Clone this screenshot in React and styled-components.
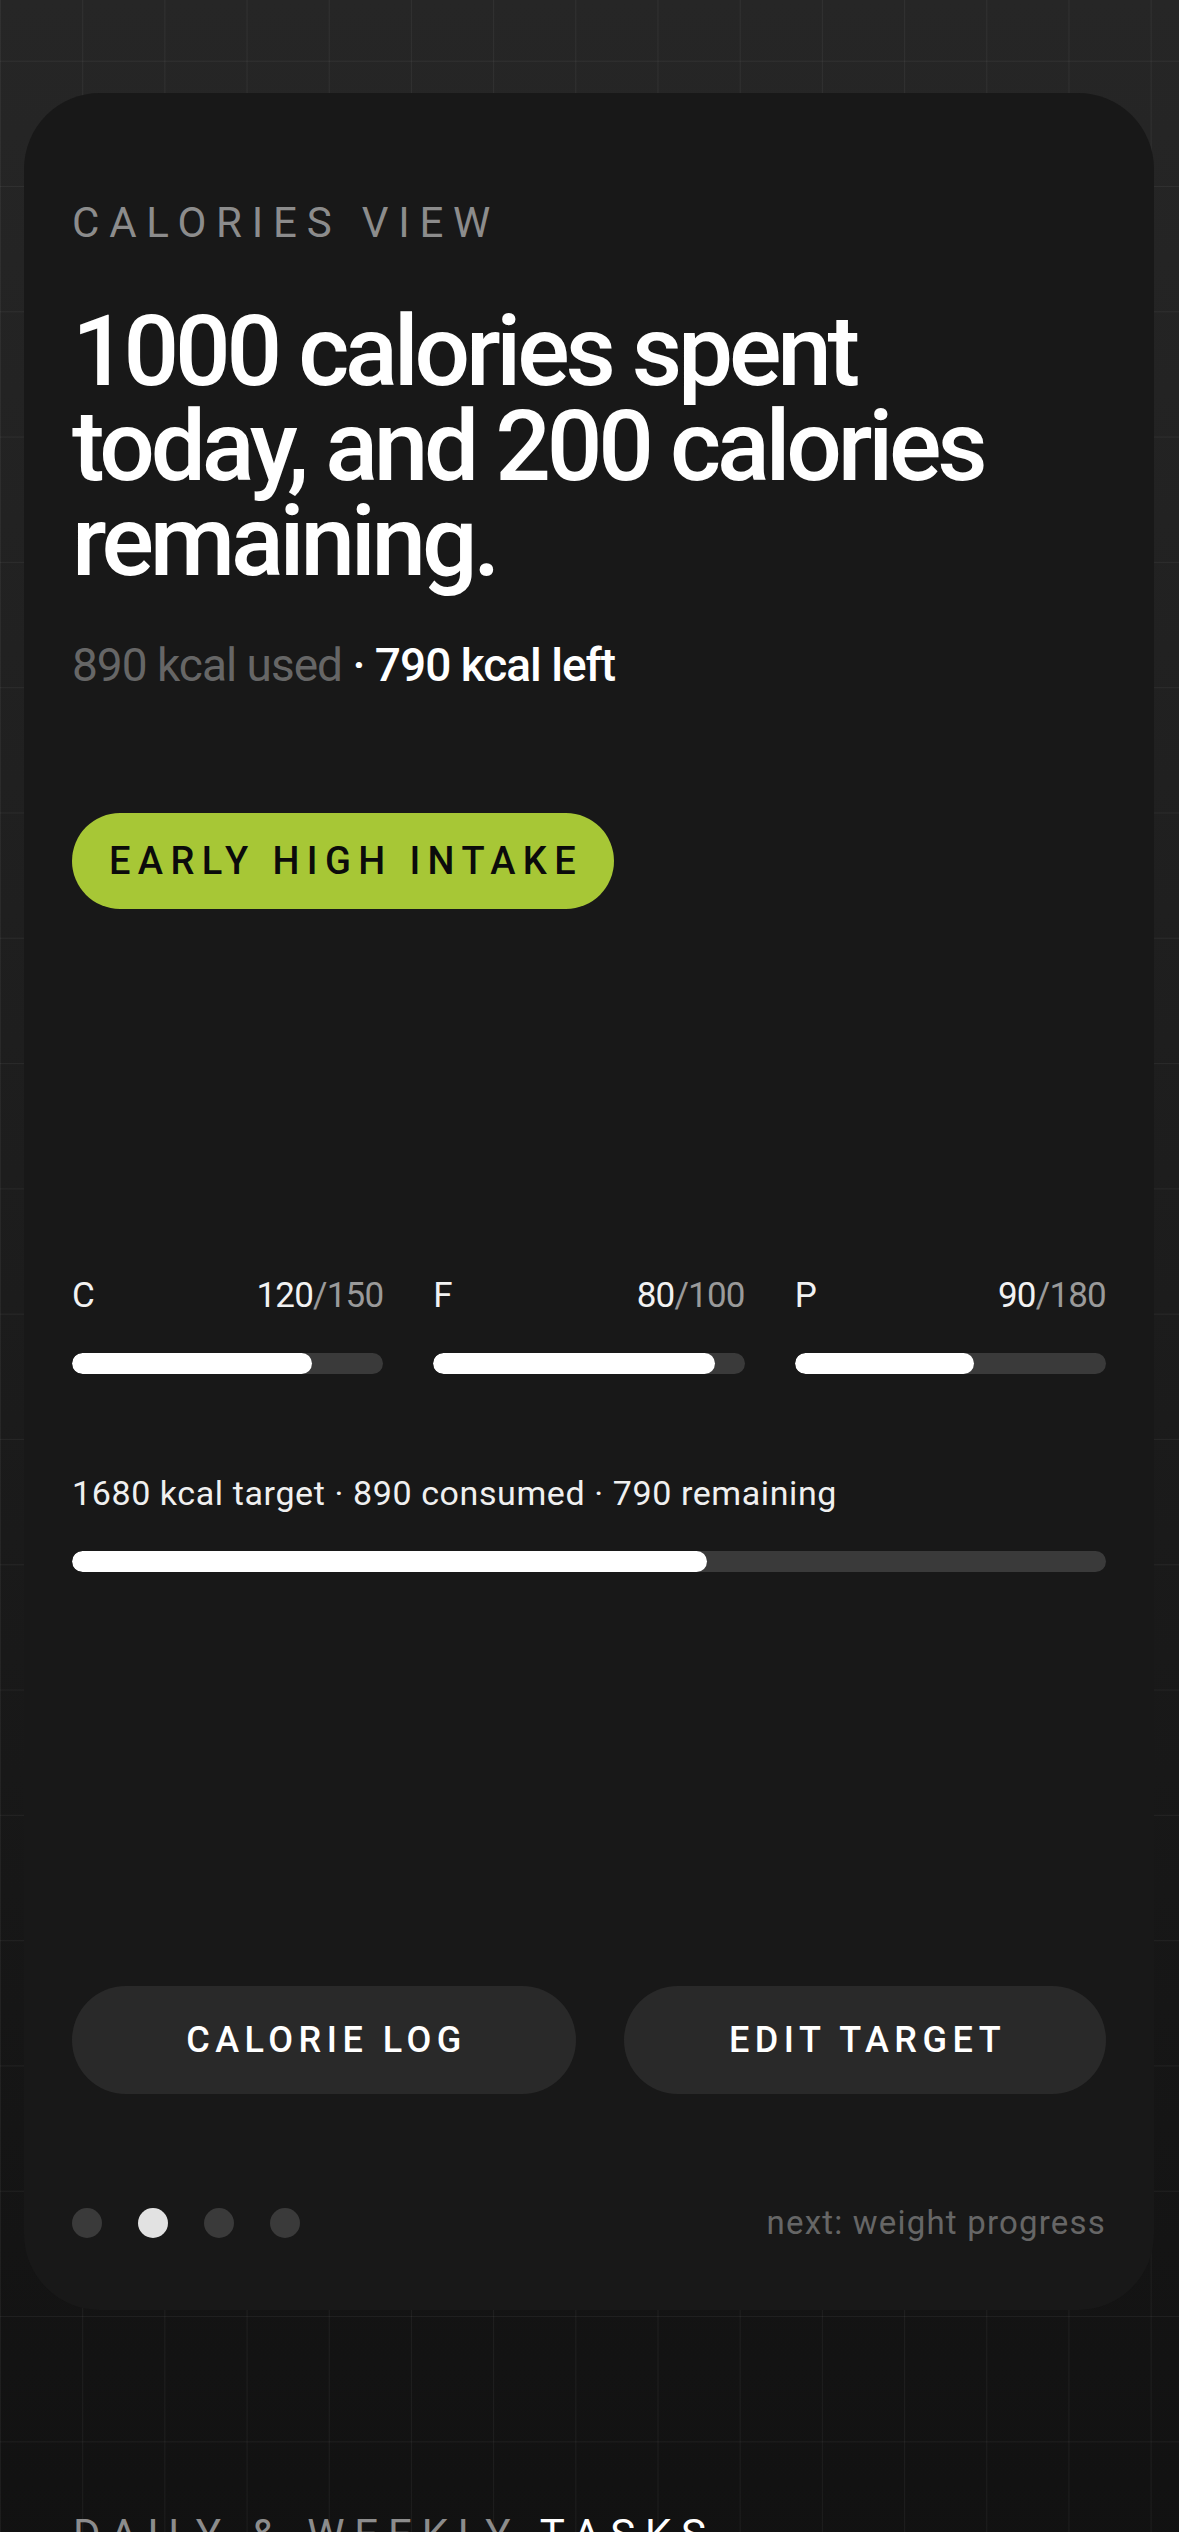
import React from 'react';
import styled, { createGlobalStyle } from 'styled-components';

const GlobalStyle = createGlobalStyle`
  html, body {
    margin: 0;
    padding: 0;
    background: #121212;
  }
  body {
    font-family: Roboto, "Noto Sans", "DejaVu Sans", sans-serif;
    -webkit-font-smoothing: antialiased;
  }
`;

const Page = styled.div`
  min-height: 100vh;
  box-sizing: border-box;
  padding: 93px 25px 40px 24px;
  overflow: hidden;
  background-color: #121212;
  background-image:
    linear-gradient(to right, rgba(255, 255, 255, 0.05) 1px, transparent 1px),
    linear-gradient(to bottom, rgba(255, 255, 255, 0.05) 1px, transparent 1px),
    linear-gradient(to bottom, #262626 0%, #1c1c1c 50%, #111111 100%);
  background-size: 82.2px 125.3px, 82.2px 125.3px, 100% 100%;
  background-position: 0 60.7px, 0 60.7px, 0 0;
`;

const Card = styled.section`
  display: flex;
  flex-direction: column;
  background: #181818;
  border-radius: 76px;
  padding: 105px 48px 67px;
`;

const Eyebrow = styled.div`
  font-size: 42px;
  line-height: 50px;
  letter-spacing: 9.8px;
  text-transform: uppercase;
  color: ${(p) => p.$color || '#8c8c8c'};
`;

const Headline = styled.h1`
  margin: 56px 0 0;
  font-size: 98px;
  line-height: 95px;
  font-weight: 500;
  letter-spacing: -4.2px;
  color: #ffffff;
`;

const Summary = styled.p`
  margin: 48px 0 0;
  font-size: 46px;
  line-height: 56px;
  letter-spacing: -1px;
`;

const Muted = styled.span`
  color: #666666;
  font-weight: 400;
`;

const Strong = styled.span`
  color: #ffffff;
  font-weight: 500;
`;

const Badge = styled.div`
  align-self: flex-start;
  margin-top: 120px;
  height: 96px;
  display: inline-flex;
  align-items: center;
  padding: 0 31px 0 37px;
  border-radius: 48px;
  background: #a7c736;
  color: #0b0b0b;
  font-size: 38px;
  font-weight: 500;
  letter-spacing: 7.4px;
`;

const MacroGrid = styled.div`
  margin-top: 366px;
  display: grid;
  grid-template-columns: repeat(3, 1fr);
  gap: 50px;
`;

const MacroHead = styled.div`
  display: flex;
  justify-content: space-between;
  font-size: 35px;
  line-height: 42px;
  color: #f2f2f2;
`;

const MacroValue = styled.span`
  letter-spacing: -0.8px;
`;

const Target = styled.span`
  color: #9a9a9a;
`;

const Track = styled.div`
  margin-top: ${(p) => p.$gap || 36}px;
  height: 21px;
  border-radius: 11px;
  background: #3a3a3a;
  overflow: hidden;
`;

const Fill = styled.div`
  height: 100%;
  border-radius: 11px;
  background: #ffffff;
`;

const TotalLabel = styled.div`
  margin-top: 98px;
  font-size: 34px;
  line-height: 42px;
  color: #f0f0f0;
  letter-spacing: 0.6px;
`;

const Actions = styled.div`
  margin-top: 414px;
  display: grid;
  grid-template-columns: 504fr 482fr;
  gap: 48px;
`;

const Action = styled.button`
  height: 108px;
  border: none;
  border-radius: 54px;
  background: #292929;
  color: #ffffff;
  font-family: inherit;
  font-size: 36px;
  font-weight: 500;
  letter-spacing: 5.5px;
  padding: 0 0 0 5px;
  cursor: pointer;
`;

const Footer = styled.div`
  margin-top: 109px;
  display: flex;
  align-items: center;
  justify-content: space-between;
`;

const Dots = styled.div`
  display: flex;
  gap: 36px;
`;

const Dot = styled.span`
  width: 30px;
  height: 30px;
  border-radius: 50%;
  background: ${(p) => (p.$active ? '#e2e2e2' : '#3a3a3a')};
`;

const NextLabel = styled.span`
  font-size: 33px;
  line-height: 40px;
  color: #666666;
  letter-spacing: 1.2px;
`;

const SectionTitle = styled(Eyebrow)`
  margin: 200px 49px 0;
`;

const Highlight = styled.span`
  color: #ffffff;
`;

const macros = [
  { key: 'C', value: 120, target: 150, fill: 77 },
  { key: 'F', value: 80, target: 100, fill: 90.5 },
  { key: 'P', value: 90, target: 180, fill: 57.7 },
];

const App = () => {
  return (
    <>
      <GlobalStyle />
      <Page>
        <Card>
          <Eyebrow>Calories view</Eyebrow>
          <Headline>
            1000 calories spent
            <br />
            today, and 200 calories
            <br />
            remaining.
          </Headline>
          <Summary>
            <Muted>890 kcal used</Muted>
            <Strong> · 790 kcal left</Strong>
          </Summary>
          <Badge>EARLY HIGH INTAKE</Badge>

          <MacroGrid>
            {macros.map((m) => (
              <div key={m.key}>
                <MacroHead>
                  <span>{m.key}</span>
                  <MacroValue>
                    {m.value}
                    <Target>/{m.target}</Target>
                  </MacroValue>
                </MacroHead>
                <Track>
                  <Fill style={{ width: `${m.fill}%` }} />
                </Track>
              </div>
            ))}
          </MacroGrid>

          <TotalLabel>1680 kcal target · 890 consumed · 790 remaining</TotalLabel>
          <Track $gap={37}>
            <Fill style={{ width: '61.4%' }} />
          </Track>

          <Actions>
            <Action>CALORIE LOG</Action>
            <Action>EDIT TARGET</Action>
          </Actions>

          <Footer>
            <Dots>
              <Dot />
              <Dot $active />
              <Dot />
              <Dot />
            </Dots>
            <NextLabel>next: weight progress</NextLabel>
          </Footer>
        </Card>

        <SectionTitle>
          Daily &amp; weekly <Highlight>tasks</Highlight>
        </SectionTitle>
      </Page>
    </>
  );
};

export default App;
